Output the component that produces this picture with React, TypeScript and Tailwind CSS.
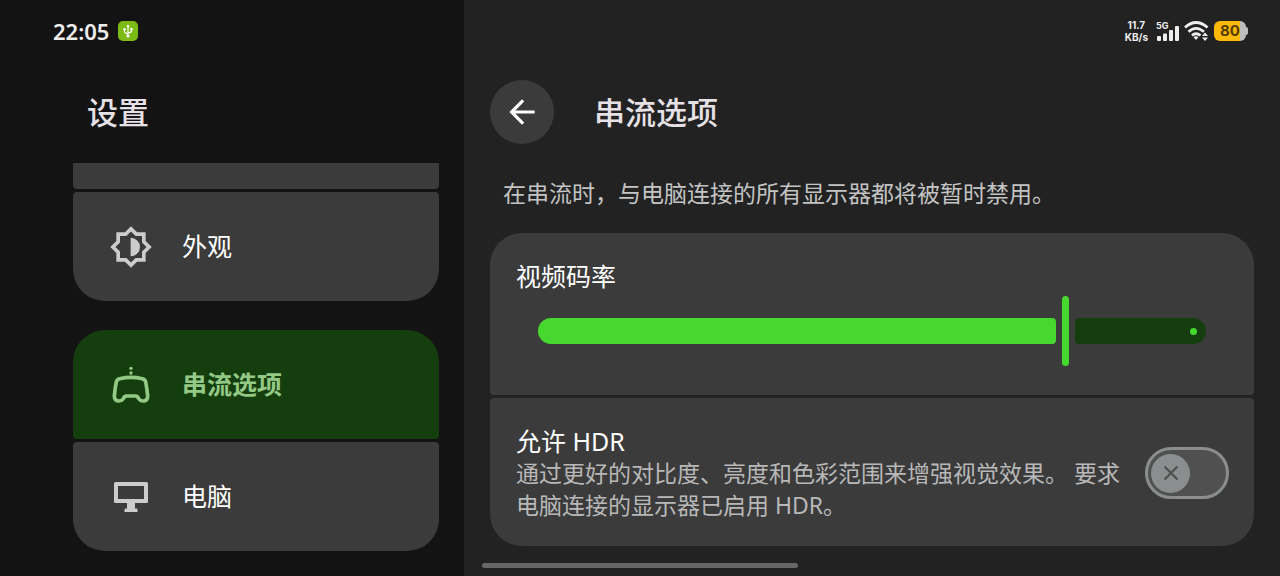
import React, { useState } from 'react';

type IconProps = { className?: string };

const AppearanceIcon = ({ className }: IconProps) => (
  <svg viewBox="0 0 24 24" fill="currentColor" className={className} aria-hidden="true">
    <path
      fillRule="evenodd"
      d="M20 15.31L23.31 12 20 8.69V4h-4.69L12 .69 8.69 4H4v4.69L.69 12 4 15.31V20h4.69L12 23.31 15.31 20H20v-4.69zm-2-.83V18h-3.52L12 20.48 9.52 18H6v-3.52L3.52 12 6 9.52V6h3.52L12 3.52 14.48 6H18v3.52L20.48 12 18 14.48z"
    />
    <path d="M11.8 6.9v10.2a5.1 5.1 0 0 0 0-10.2z" />
  </svg>
);

const GamepadIcon = ({ className }: IconProps) => (
  <svg viewBox="-10 -11 132 132" className={className} aria-hidden="true">
    <path
      d="M12 45Q14 38 22 36Q56 28 90 36Q98 38 100 45Q104 66 106 88Q106 103 92 103Q84 103 80 97L75 90Q73 88 70 88H42Q39 88 37 90L32 97Q28 103 20 103Q6 103 6 88Q8 66 12 45Z"
      fill="none"
      stroke="currentColor"
      strokeWidth="11"
      strokeLinejoin="round"
    />
    <circle cx="56" cy="5" r="5" fill="currentColor" />
    <circle cx="56" cy="19" r="5" fill="currentColor" />
  </svg>
);

const MonitorIcon = ({ className }: IconProps) => (
  <svg viewBox="-5 -7 44 44" fill="currentColor" className={className} aria-hidden="true">
    <path
      fillRule="evenodd"
      d="M1.5 0h31A1.5 1.5 0 0 1 34 1.5v18a1.5 1.5 0 0 1-1.5 1.5H21v5.5h1.5a1 1 0 0 1 1 1V30h-13v-2.5a1 1 0 0 1 1-1H13V21H1.5A1.5 1.5 0 0 1 0 19.5v-18A1.5 1.5 0 0 1 1.5 0zM4 4v13h26V4z"
    />
  </svg>
);

const BackIcon = ({ className }: IconProps) => (
  <svg viewBox="0 0 24 24" fill="currentColor" className={className} aria-hidden="true">
    <path d="M20 11H7.83l5.59-5.59L12 4l-8 8 8 8 1.41-1.41L7.83 13H20v-2z" />
  </svg>
);

const UsbIcon = ({ className }: IconProps) => (
  <svg viewBox="0 0 20 20" className={className} aria-hidden="true">
    <path
      d="M10 5v10M6.5 8.5v2q0 1.500 3.5 2.5M13.5 8v2q0 1.500-3.5 2"
      fill="none"
      stroke="#fff"
      strokeWidth="1.2"
    />
    <path d="M10 3.5l1.8 2.5H8.2z" fill="#fff" />
    <circle cx="10" cy="15" r="1.6" fill="#fff" />
    <circle cx="6.5" cy="8.3" r="1.2" fill="#fff" />
    <path d="M12.4 7h2.2v2.2h-2.2z" fill="#fff" />
  </svg>
);

const SignalIcon = ({ className }: IconProps) => (
  <svg viewBox="0 0 23 15" fill="currentColor" className={className} aria-hidden="true">
    <rect x="1" y="10" width="4" height="5" rx="1" />
    <rect x="7" y="7.5" width="4" height="7.5" rx="1" />
    <rect x="13" y="4" width="4" height="11" rx="1" />
    <rect x="19" y="0" width="4" height="15" rx="1" />
  </svg>
);

const WifiIcon = ({ className }: IconProps) => (
  <svg viewBox="0 0 25 20" className={className} aria-hidden="true">
    <g fill="none" stroke="currentColor" strokeWidth="2.8">
      <path d="M1 6.500Q12 -3.500 23.500 6.500" />
      <path d="M4.500 10.800Q12 4 20 10.800" />
      <path d="M8 14.500Q12 11 16.500 14.500" />
    </g>
    <path d="M9.500 16q2.500-1.500 5 0L12 19z" fill="currentColor" />
    <path d="M18 15l3-3.500 3 3.500zM18 16.500h6L21 20z" fill="currentColor" />
  </svg>
);

const navItems = [
  {
    id: 'appearance',
    label: '外观',
    icon: AppearanceIcon,
    shape: 'rounded-t-sm rounded-b-[32px]'
  },
  {
    id: 'streaming',
    label: '串流选项',
    icon: GamepadIcon,
    shape: 'mt-[26px] rounded-t-[32px] rounded-b-sm'
  },
  {
    id: 'computer',
    label: '电脑',
    icon: MonitorIcon,
    shape: 'rounded-t-sm rounded-b-[32px]'
  }
];

const Sidebar: React.FC = () => {
  const [active, setActive] = useState('streaming');

  return (
    <aside className="bg-[#131313] pb-6 pl-[73px] pr-[25px]">
      <div className="-ml-5 flex h-[62px] items-center gap-[9px]">
        <time className="text-[22px] font-semibold text-[#eeeeee]">22:05</time>
        <UsbIcon className="h-5 w-5 rounded-[5px] bg-[#7cba14]" />
      </div>
      <h1 className="mt-[18px] flex h-16 items-center pl-[14px] text-[31px] font-medium text-[#e6e1e6]">
        设置
      </h1>
      <nav className="mt-[19px] flex flex-col gap-[3px]">
        {/* tail of the item scrolled out of view */}
        <div className="h-[26px] rounded-b-sm bg-[#3b3b3b]" />
        {navItems.map(({ id, label, icon: Icon, shape }) => {
          const selected = id === active;
          return (
            <button
              key={id}
              type="button"
              aria-current={selected ? 'page' : undefined}
              onClick={() => setActive(id)}
              className={`flex h-[109px] items-center gap-[29px] pl-9 text-[25px] ${shape} ${
                selected ? 'bg-[#153e0e] font-bold text-[#93c985]' : 'bg-[#3b3b3b] text-white'
              }`}
            >
              <Icon className={`h-11 w-11 ${selected ? 'text-[#93c985]' : 'text-[#cccccc]'}`} />
              {label}
            </button>
          );
        })}
      </nav>
    </aside>
  );
};

const StatusIcons: React.FC = () => (
  <div className="flex h-[62px] items-center justify-end gap-[5px] pr-[6px] font-[Inter,sans-serif] text-[#eeeeee]">
    <div className="text-center text-[10px] font-bold leading-3">
      <div>11.7</div>
      <div>KB/s</div>
    </div>
    <div className="relative flex h-5 w-[26px] items-end justify-end">
      <span className="absolute left-[3px] top-0 text-[9px] font-bold leading-[9px]">5G</span>
      <SignalIcon className="h-[15px] w-[23px]" />
    </div>
    <WifiIcon className="h-5 w-[25px]" />
    <div className="flex items-center">
      <div className="flex h-5 w-8 items-center rounded-[6px] bg-linear-to-r from-[#fcb90a] from-80% to-[#bdbdbd] to-80% pl-[6px] text-[15px] font-bold text-[#553c00]">
        80
      </div>
      <div className="h-2 w-[2px] rounded-r-sm bg-[#bdbdbd]" />
    </div>
  </div>
);

const MAX_BITRATE = 500;

const BitrateSlider: React.FC = () => {
  const [value, setValue] = useState(399);

  return (
    <div className="relative mx-[22px] mt-1 flex h-[70px] items-center gap-[6px]">
      <div
        className="h-[26px] basis-0 rounded-l-[13px] rounded-r-[4px] bg-[#46d82e]"
        style={{ flexGrow: value }}
      />
      <div className="h-full w-[7px] rounded-full bg-[#46d82e]" />
      <div
        className="flex h-[26px] basis-0 items-center justify-end rounded-l-[4px] rounded-r-[13px] bg-[#153e0e]"
        style={{ flexGrow: MAX_BITRATE - value }}
      >
        <span className="mr-[9px] h-[7px] w-[7px] rounded-full bg-[#46d82e]" />
      </div>
      <input
        id="bitrate"
        type="range"
        min={0}
        max={MAX_BITRATE}
        value={value}
        onChange={(e) => setValue(Number(e.target.value))}
        className="absolute inset-0 h-full w-full cursor-pointer opacity-0"
      />
    </div>
  );
};

const HdrSwitch: React.FC = () => (
  <span className="relative flex h-[52px] w-[84px] shrink-0 items-center">
    <input
      id="hdr"
      type="checkbox"
      role="switch"
      className="peer h-full w-full appearance-none rounded-full border-[3px] border-[#8b8e8e] bg-[#505050] checked:bg-[#153e0e]"
    />
    <span className="pointer-events-none absolute left-[6px] flex h-[39px] w-[39px] items-center justify-center rounded-full bg-[#8b8e8e] text-[#505050] peer-checked:left-[39px]">
      <svg viewBox="0 0 16 16" className="h-4 w-4" aria-hidden="true">
        <path d="M1.5 1.5l13 13M14.5 1.5l-13 13" stroke="currentColor" strokeWidth="2.2" />
      </svg>
    </span>
  </span>
);

const App: React.FC = () => {
  return (
    <div
      lang="zh-CN"
      className="relative grid min-h-screen grid-cols-[29fr_51fr] bg-[#222222] font-['Noto_Sans','Noto_Sans_CJK_SC',sans-serif]"
    >
      <Sidebar />
      <main className="px-[26px] pb-[30px]">
        <StatusIcons />
        <header className="mt-[18px] flex items-center gap-10">
          <button
            type="button"
            aria-label="返回"
            className="flex h-16 w-16 items-center justify-center rounded-full bg-[#3b3b3b] text-white"
          >
            <BackIcon className="h-[38px] w-[38px]" />
          </button>
          <h2 className="text-[31px] font-medium text-[#e6e1e6]">串流选项</h2>
        </header>
        <p className="mt-[33px] pl-[13px] text-[23px] leading-8 text-[#c4c4c4]">
          在串流时，与电脑连接的所有显示器都将被暂时禁用。
        </p>
        <div className="mt-6 flex flex-col gap-[3px]">
          <section className="rounded-t-[32px] rounded-b-sm bg-[#3b3b3b] px-[26px] pb-[29px] pt-[27px]">
            <label htmlFor="bitrate" className="block text-[25px] leading-8 text-white">
              视频码率
            </label>
            <BitrateSlider />
          </section>
          <section className="flex items-center gap-4 rounded-t-sm rounded-b-[32px] bg-[#3b3b3b] pb-[25px] pl-[26px] pr-[25px] pt-[27px]">
            <div className="flex-1">
              <label htmlFor="hdr" className="block text-[25px] leading-8 text-white">
                允许 HDR
              </label>
              <p className="text-[23px] leading-8 text-[#b8b8b8]">
                通过更好的对比度、亮度和色彩范围来增强视觉效果。 要求电脑连接的显示器已启用 HDR。
              </p>
            </div>
            <HdrSwitch />
          </section>
        </div>
      </main>
      {/* gesture bar */}
      <div className="absolute bottom-2 left-1/2 h-[5px] w-[316px] -translate-x-1/2 rounded-full bg-[#666666]" />
    </div>
  );
};

export default App;
